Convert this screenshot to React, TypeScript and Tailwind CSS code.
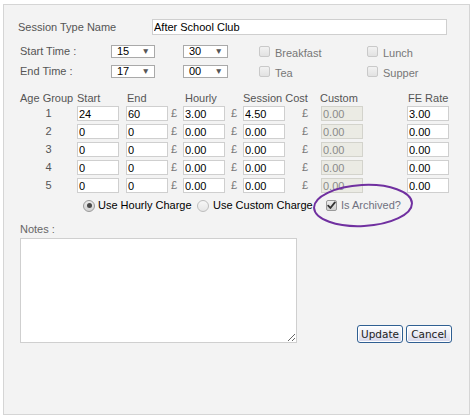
import React from 'react';

const ROWS = [
  { n: 1, start: '24', end: '60', hourly: '3.00', session: '4.50', custom: '0.00', fe: '3.00' },
  { n: 2, start: '0', end: '0', hourly: '0.00', session: '0.00', custom: '0.00', fe: '0.00' },
  { n: 3, start: '0', end: '0', hourly: '0.00', session: '0.00', custom: '0.00', fe: '0.00' },
  { n: 4, start: '0', end: '0', hourly: '0.00', session: '0.00', custom: '0.00', fe: '0.00' },
  { n: 5, start: '0', end: '0', hourly: '0.00', session: '0.00', custom: '0.00', fe: '0.00' },
];

const INPUT = 'h-[15px] w-[42px] border border-[#cfcfcf] bg-white px-[1px] text-[11px] leading-[13px] text-black outline-none';

function Select({ value, w }: { value: string; w: string }) {
  return (
    <div className={`${w} flex h-[13px] items-center justify-between border border-[#a9a9a9] bg-white pl-[5px] pr-[4px] text-black`}>
      <span>{value}</span>
      <span className="text-[8.5px] leading-none text-[#555]">▼</span>
    </div>
  );
}

function Box({ checked = false }: { checked?: boolean }) {
  return (
    <span
      className={`flex h-[11px] w-[11px] shrink-0 items-center justify-center rounded-[2px] border ${
        checked ? 'border-[#9a9a9a] bg-gradient-to-b from-[#eeeeee] to-[#cfcfcf]' : 'border-[#c9c9c9] bg-gradient-to-b from-[#f2f2f2] to-[#e2e2e2]'
      }`}
    >
      {checked && (
        <svg width="9" height="9" viewBox="0 0 9 9">
          <path d="M1.2 4.6 L3.4 7 L7.9 1.4" fill="none" stroke="#333" strokeWidth="1.8" strokeLinecap="round" strokeLinejoin="round" />
        </svg>
      )}
    </span>
  );
}

function Radio({ on = false }: { on?: boolean }) {
  return (
    <span
      className={`flex h-[12px] w-[12px] shrink-0 items-center justify-center rounded-full border ${
        on ? 'border-[#9a9a9a] bg-gradient-to-b from-[#ededed] to-[#d2d2d2]' : 'border-[#bdbdbd] bg-gradient-to-b from-[#f7f7f7] to-[#e6e6e6]'
      }`}
    >
      {on && <span className="h-[5px] w-[5px] rounded-full bg-[#4a4a4a]" />}
    </span>
  );
}

function Meal({ label, w }: { label: string; w: string }) {
  return (
    <div className={`${w} flex h-[13px] items-center`}>
      <Box />
      <span className="ml-[5px] pt-[4px] text-[#777]">{label}</span>
    </div>
  );
}

export default function App() {
  return (
    <div className="min-h-screen bg-white pl-[3px] pt-[4px]">
      <div className="relative h-[411px] w-[467px] border border-[#d5d5d5] bg-[#f3f3f3] pl-[14px] pt-[14px] font-['Liberation_Sans',Arial,sans-serif] text-[11px] leading-[13px] text-[#555]">
        {/* name */}
        <div className="flex h-[16px] items-center">
          <span className="w-[134px]">Session Type Name</span>
          <input
            readOnly
            value="After School Club"
            className="h-[16px] w-[295px] border border-[#cfcfcf] bg-white px-[1px] text-[11px] text-black outline-none"
          />
        </div>

        {/* times */}
        <div className="mt-[10px] flex h-[13px] items-center">
          <span className="w-[93px] pl-[2px]">Start Time :</span>
          <Select value="15" w="w-[44px]" />
          <div className="w-[28px]" />
          <Select value="30" w="w-[45px]" />
          <div className="w-[31px]" />
          <Meal label="Breakfast" w="w-[108px]" />
          <Meal label="Lunch" w="w-[80px]" />
        </div>
        <div className="mt-[7px] flex h-[13px] items-center">
          <span className="w-[93px] pl-[2px]">End Time :</span>
          <Select value="17" w="w-[44px]" />
          <div className="w-[28px]" />
          <Select value="00" w="w-[45px]" />
          <div className="w-[31px]" />
          <Meal label="Tea" w="w-[108px]" />
          <Meal label="Supper" w="w-[80px]" />
        </div>

        {/* table header */}
        <div className="mt-[14px] flex h-[13px] pl-[2px]">
          <span className="w-[57px]">Age Group</span>
          <span className="w-[50px]">Start</span>
          <span className="w-[58px]">End</span>
          <span className="w-[58px]">Hourly</span>
          <span className="w-[77px]">Session Cost</span>
          <span className="w-[88px]">Custom</span>
          <span>FE Rate</span>
        </div>

        <div className="mt-[1px] flex flex-col gap-[3px] pl-[2px]">
          {ROWS.map((r) => (
            <div key={r.n} className="flex h-[15px] items-center">
              <span className="w-[57px] text-center">{r.n}</span>
              <input readOnly value={r.start} className={INPUT} />
              <div className="w-[7px]" />
              <input readOnly value={r.end} className={INPUT} />
              <span className="w-[15px] pl-[3px] text-[#777]">£</span>
              <input readOnly value={r.hourly} className={INPUT} />
              <span className="w-[18px] pl-[6px] text-[#777]">£</span>
              <input readOnly value={r.session} className={INPUT} />
              <span className="w-[36px] pl-[17px] text-[#777]">£</span>
              <input
                readOnly
                value={r.custom}
                className="h-[15px] w-[42px] border border-[#d3d3cc] bg-[#ebebe4] px-[1px] text-[11px] leading-[13px] text-[#8a8a8a] outline-none"
              />
              <div className="w-[44px]" />
              <input readOnly value={r.fe} className={INPUT} />
            </div>
          ))}
        </div>

        {/* charge options */}
        <div className="mt-[6px] flex h-[13px] items-center pl-[65px] text-black">
          <Radio on />
          <span className="ml-[3px] w-[99px]">Use Hourly Charge</span>
          <Radio />
          <span className="ml-[4px] w-[113px]">Use Custom Charge</span>
          <Box checked />
          <span className="ml-[4px] text-[#6f7180]">Is Archived?</span>
        </div>

        {/* notes */}
        <div className="mt-[11px] h-[13px] pl-[2px] text-[#666]">Notes :</div>
        <div className="mt-[2px] flex items-end pl-[2px]">
          <textarea className="h-[105px] w-[277px] border border-[#cfcfcf] bg-white outline-none" />
          <div className="ml-[60px] flex gap-[3px] font-['DejaVu_Sans',Verdana,sans-serif] text-[10.5px] text-[#222]">
            <button className="h-[18px] w-[46px] rounded-[3px] border border-[#2f5f92] bg-gradient-to-b from-white to-[#d6d6ea] leading-[16px] shadow-[inset_0_0_0_1px_#ffffff]">
              Update
            </button>
            <button className="h-[18px] w-[46px] rounded-[3px] border border-[#2f5f92] bg-gradient-to-b from-white to-[#d6d6ea] leading-[16px] shadow-[inset_0_0_0_1px_#ffffff]">
              Cancel
            </button>
          </div>
        </div>

        {/* highlight ring */}
        <svg className="pointer-events-none absolute left-[308px] top-[178px]" width="102" height="45" viewBox="0 0 102 45">
          <ellipse cx="51" cy="22.5" rx="49" ry="20.5" transform="rotate(-3 51 22.5)" fill="none" stroke="#7030a0" strokeWidth="2" />
        </svg>
      </div>
    </div>
  );
}
